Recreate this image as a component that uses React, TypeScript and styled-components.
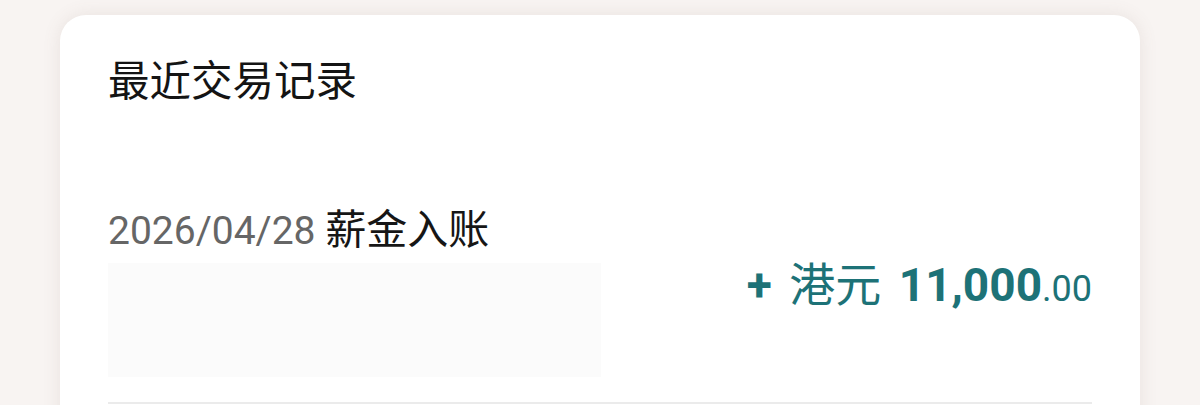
import React from "react";
import styled, { createGlobalStyle } from "styled-components";

const Global = createGlobalStyle`
  html, body {
    margin: 0;
    padding: 0;
    background: #f8f4f2;
  }
  body {
    font-family: Roboto, "Noto Sans CJK SC", "Noto Sans", sans-serif;
    -webkit-font-smoothing: antialiased;
  }
`;

const Page = styled.div`
  padding: 15px 60px 0 60px;
  height: 405px;
  box-sizing: border-box;
  overflow: hidden;
`;

const Card = styled.section`
  background: #ffffff;
  border-radius: 26px;
  box-shadow: 0 0 18px rgba(120, 100, 90, 0.12);
  padding: 46px 48px 40px 48px;
  min-height: 500px;
  box-sizing: border-box;
`;

const Title = styled.h2`
  margin: 0;
  font-size: 41.5px;
  line-height: 42px;
  font-weight: 400;
  color: #141414;
`;

const Row = styled.div`
  margin-top: 107px;
  display: flex;
  justify-content: space-between;
  align-items: flex-start;
`;

const LeftCol = styled.div`
  display: flex;
  flex-direction: column;
`;

const DateLine = styled.div`
  font-size: 39px;
  line-height: 40px;
  color: #1a1a1a;
  white-space: nowrap;
`;

const DateText = styled.span`
  color: #666666;
`;

const Desc = styled.span`
  color: #161616;
  font-size: 41px;
`;

const Placeholder = styled.div`
  margin-top: 12px;
  width: 493px;
  height: 114px;
  background: #fbfbfb;
`;

const Amount = styled.div`
  padding-top: 52px;
  font-size: 46px;
  line-height: 46px;
  color: #1d7277;
  white-space: nowrap;
  word-spacing: 6px;
`;

const Prefix = styled.span`
  font-weight: 400;
`;

const Plus = styled.span`
  font-weight: 700;
`;

const Integer = styled.span`
  font-weight: 700;
`;

const Decimal = styled.span`
  font-size: 36px;
  font-weight: 400;
`;

const Divider = styled.div`
  margin-top: 25px;
  height: 2px;
  background: #ebebeb;
`;

export default function App() {
  return (
    <>
      <Global />
      <Page>
        <Card>
          <Title>最近交易记录</Title>
          <Row>
            <LeftCol>
              <DateLine>
                <DateText>2026/04/28</DateText> <Desc>薪金入账</Desc>
              </DateLine>
              <Placeholder />
            </LeftCol>
            <Amount>
              <Prefix>
                <Plus>+</Plus> 港元{" "}
              </Prefix>
              <Integer>11,000</Integer>
              <Decimal>.00</Decimal>
            </Amount>
          </Row>
          <Divider />
        </Card>
      </Page>
    </>
  );
}
